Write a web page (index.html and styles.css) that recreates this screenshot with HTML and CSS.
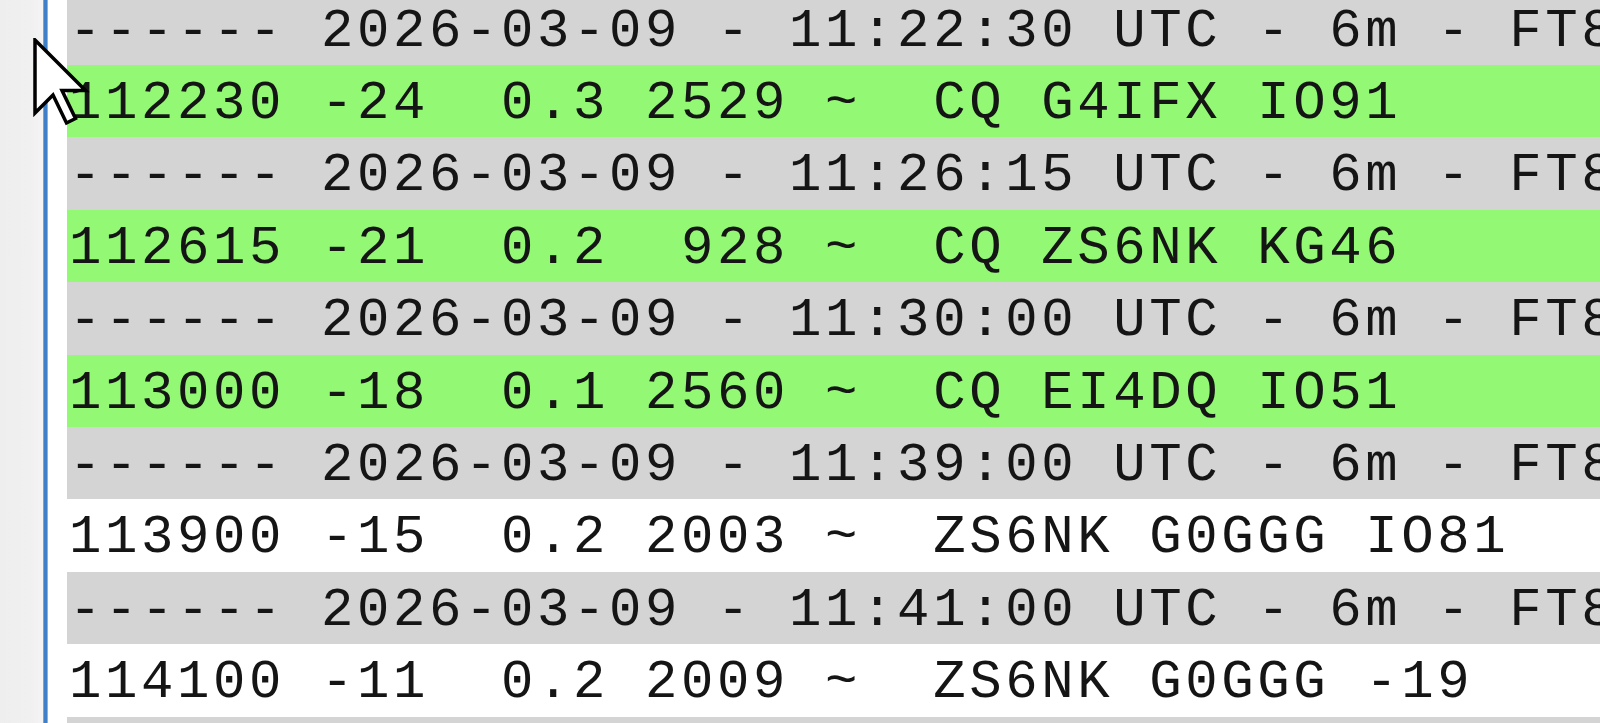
FILE: index.html
```html
<!DOCTYPE html>
<html>
<head>
<meta charset="utf-8">
<link rel="stylesheet" href="styles.css">
</head>
<body>
<div class="app">
  <div class="side"></div>
  <div class="edge"></div>
  <div class="gutter"></div>
  <div class="list">
    <div class="row sep">------ 2026-03-09 - 11:22:30 UTC - 6m - FT8</div>
    <div class="row cq">112230 -24  0.3 2529 ~  CQ G4IFX IO91</div>
    <div class="row sep">------ 2026-03-09 - 11:26:15 UTC - 6m - FT8</div>
    <div class="row cq">112615 -21  0.2  928 ~  CQ ZS6NK KG46</div>
    <div class="row sep">------ 2026-03-09 - 11:30:00 UTC - 6m - FT8</div>
    <div class="row cq">113000 -18  0.1 2560 ~  CQ EI4DQ IO51</div>
    <div class="row sep">------ 2026-03-09 - 11:39:00 UTC - 6m - FT8</div>
    <div class="row">113900 -15  0.2 2003 ~  ZS6NK G0GGG IO81</div>
    <div class="row sep">------ 2026-03-09 - 11:41:00 UTC - 6m - FT8</div>
    <div class="row">114100 -11  0.2 2009 ~  ZS6NK G0GGG -19</div>
    <div class="row sep">------ 2026-03-09 - 11:43:00 UTC - 6m - FT8</div>
  </div>
</div>
<svg class="cursor" width="60" height="100" viewBox="0 0 60 100">
  <path d="M2 2 L2 75 L20 57 L33.5 85 L42.5 80.5 L29 52.5 L52.5 52.5 Z" fill="#fff" stroke="#000" stroke-width="3.5" stroke-linejoin="miter"/>
</svg>
</body>
</html>
```

FILE: styles.css
```css
html, body {
  margin: 0;
  padding: 0;
  background: #ffffff;
  overflow: hidden;
}
.app {
  display: flex;
  width: 1600px;
  height: 723px;
  overflow: hidden;
}
.side {
  width: 43px;
  flex: none;
  background: linear-gradient(to right, #eeeeee 0, #f0f0f0 30px, #f4f4f4 43px);
}
.edge {
  width: 5px;
  flex: none;
  background: linear-gradient(to right, #8db6e4 0, #3f7fc8 1.5px, #3f7fc8 3.5px, #a9cbf0 5px);
}
.gutter {
  width: 19px;
  flex: none;
  background: #ffffff;
}
.list {
  flex: 1;
  min-width: 0;
  margin-top: -7.4px;
  font-family: "Courier New", "Liberation Mono", monospace;
  font-size: 54px;
  letter-spacing: 3.6px;
  color: #151515;
}
.row {
  box-sizing: border-box;
  height: 72.4px;
  padding-top: 6px;
  line-height: 66.4px;
  white-space: pre;
  padding-left: 2px;
  overflow: hidden;
}
.sep {
  background: #d4d4d4;
}
.cq {
  background: #93f874;
}
.cursor {
  position: absolute;
  left: 33px;
  top: 38px;
}
```
